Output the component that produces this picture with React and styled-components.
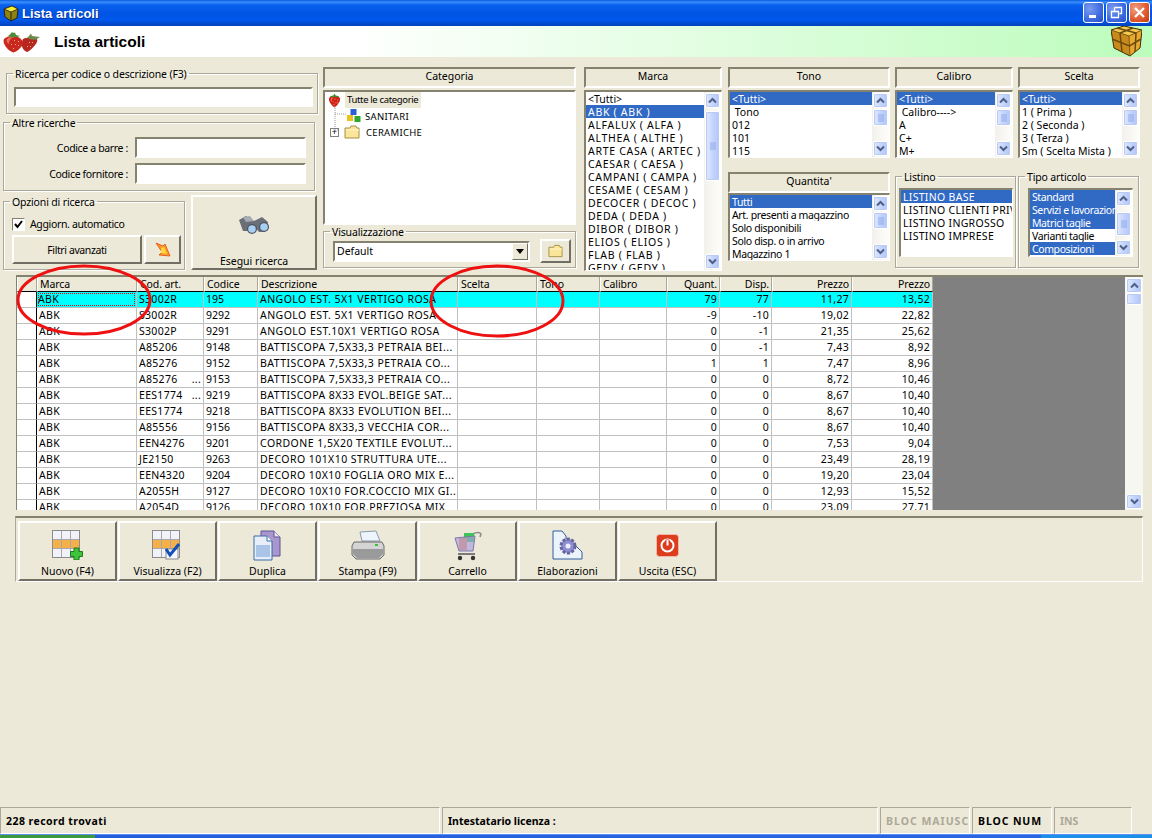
import React from "react";
import styled, { createGlobalStyle } from "styled-components";

const GlobalStyle = createGlobalStyle`
  html, body { margin: 0; padding: 0; background: #ece9d8; }
  * { box-sizing: border-box; }
`;

const sunken = `
  border-style: solid;
  border-width: 2px;
  border-color: #85836f #fff #fff #85836f;
`;
const raised = `
  border-style: solid;
  border-width: 2px;
  border-color: #fff #716f64 #716f64 #fff;
`;

const Page = styled.div`
  position: relative;
  width: 1152px;
  height: 838px;
  display: flex;
  flex-direction: column;
  overflow: hidden;
  background: #ece9d8;
  color: #000;
  font-family: "Noto Sans", "Liberation Sans", sans-serif;
  font-size: 10.5px;
`;

const TitleBar = styled.div`
  height: 26px;
  flex: none;
  display: flex;
  align-items: center;
  padding: 0 2px 0 3px;
  gap: 3px;
  background: linear-gradient(180deg, #0a5ae0 0, #3a8ffb 2px, #0a60ee 5px, #0054e3 14px, #0058ee 20px, #0042bb 26px);
  color: #fff;
  font-family: "Liberation Sans", sans-serif;
  font-weight: bold;
  font-size: 13px;
  text-shadow: 1px 1px 0 #0a2f9a;
`;
const TitleText = styled.span`
  flex: 1;
`;
const WinButtons = styled.div`
  display: flex;
  gap: 2px;
  margin-top: -2px;
`;
const WinButton = styled.div`
  width: 21px;
  height: 21px;
  border: 1px solid #fff;
  border-radius: 3px;
  display: flex;
  align-items: center;
  justify-content: center;
  background: ${(p) =>
    p.$close
      ? "radial-gradient(circle at 30% 30%, #f0a080, #e0582f 60%, #c03a12)"
      : "radial-gradient(circle at 30% 30%, #7a9cf0, #3d6ae0 60%, #2a50c8)"};
`;

const Header = styled.div`
  height: 31px;
  flex: none;
  display: flex;
  align-items: center;
  padding: 0 10px 0 3px;
  background: linear-gradient(90deg, #fff 0, #fff 30%, #bcfcbc 100%);
`;
const HeaderTitle = styled.div`
  flex: 1;
  margin-left: 13px;
  font-family: "Liberation Sans", sans-serif;
  font-weight: bold;
  font-size: 15.500px;
`;

const Filters = styled.div`
  height: 215px;
  flex: none;
  display: flex;
  padding: 10px 0 0 3px;
`;
const LeftCol = styled.div`
  width: 315px;
  margin-right: 5px;
  display: flex;
  flex-direction: column;
`;
const Group = styled.fieldset`
  margin: ${(p) => p.$margin || 0};
  width: ${(p) => p.$w}px;
  height: ${(p) => p.$h}px;
  flex: none;
  min-width: 0;
  padding: ${(p) => p.$top || 0}px ${(p) => p.$right || 0}px 0 0;
  border: 1px solid #aca899;
  box-shadow: 1px 1px 0 #fff, inset 1px 1px 0 #fff;
  & > :not(legend) {
    margin-left: ${(p) => p.$inset || 0}px;
  }
`;
const Legend = styled.legend`
  margin-left: 6px;
  padding: 0 2px;
  line-height: 15px;
  height: 13px;
  letter-spacing: -0.15px;
  white-space: nowrap;
`;
const TextBox = styled.div`
  ${sunken}
  background: #fff;
  width: ${(p) => (p.$w ? `${p.$w}px` : "auto")};
  height: ${(p) => p.$h || 21}px;
`;
const FieldRow = styled.div`
  display: flex;
  align-items: center;
  justify-content: flex-end;
  gap: 7px;
  margin-bottom: 5px;
  letter-spacing: -0.35px;
`;
const OptionsRow = styled.div`
  display: flex;
  align-items: flex-start;
  margin-top: 4px;
`;
const CheckRow = styled.div`
  display: flex;
  align-items: center;
  gap: 5px;
  height: 14px;
  letter-spacing: -0.35px;
`;
const CheckBox = styled.div`
  width: 13px;
  height: 13px;
  ${sunken}
  border-width: 1px;
  background: #fff;
  display: flex;
  align-items: center;
  justify-content: center;
`;
const ButtonRow = styled.div`
  display: flex;
  gap: 2px;
  margin-top: 4px;
`;
const Button = styled.div`
  ${raised}
  width: ${(p) => p.$w}px;
  height: ${(p) => p.$h}px;
  flex: none;
  display: flex;
  align-items: center;
  justify-content: center;
  background: #ece9d8;
  letter-spacing: ${(p) => p.$spread || 0}px;
`;
const SearchButton = styled(Button)`
  flex-direction: column;
  justify-content: flex-start;
  margin-left: 6px;
  padding-top: 18px;
`;
const SearchLabel = styled.span`
  margin-top: 19px;
`;

const Column = styled.div`
  width: ${(p) => p.$w}px;
  margin-right: ${(p) => p.$mr || 0}px;
  flex: none;
  display: flex;
  flex-direction: column;
`;
const PanelHead = styled.div`
  ${sunken}
  height: ${(p) => p.$h || 21}px;
  flex: none;
  display: flex;
  align-items: center;
  justify-content: center;
  padding-bottom: 3px;
`;
const TreeBox = styled.div`
  ${sunken}
  background: #fff;
  height: 135px;
  margin-top: 2px;
  position: relative;
`;
const TreeRow = styled.div`
  height: 16px;
  display: flex;
  align-items: center;
  padding-left: ${(p) => p.$indent}px;
  white-space: nowrap;
`;
const TreeRoot = styled.span`
  background: #ece9d8;
  margin-left: 3px;
  padding: 0 3px 0 2px;
  line-height: 16px;
  font-size: 9.500px;
  letter-spacing: -0.35px;
`;
const TreeText = styled.span`
  margin-left: ${(p) => p.$ml || 5}px;
  font-size: 9.500px;
  letter-spacing: 0.3px;
`;
const TreeLines = styled.svg`
  position: absolute;
  left: 0;
  top: 0;
`;
const Expander = styled.span`
  width: 9px;
  height: 9px;
  margin-right: 5px;
  border: 1px solid #808080;
  display: flex;
  align-items: center;
  justify-content: center;
  background: #fff;
  font-size: 9px;
  line-height: 7px;
  font-family: "Liberation Sans", sans-serif;
`;
const ViewRow = styled.div`
  display: flex;
  align-items: center;
  gap: 10px;
`;
const Select = styled.div`
  ${sunken}
  width: 197px;
  height: 21px;
  background: #fff;
  display: flex;
  align-items: center;
  justify-content: space-between;
  padding-left: 2px;
`;
const SelectArrow = styled.div`
  ${raised}
  border-width: 1px;
  width: 16px;
  height: 17px;
  background: #ece9d8;
  display: flex;
  align-items: center;
  justify-content: center;
`;

const ListBox = styled.div`
  ${sunken}
  border-bottom-width: 1px;
  border-right-width: 1px;
  background: #fff;
  height: ${(p) => p.$h}px;
  margin-top: ${(p) => p.$mt || 0}px;
  display: flex;
  overflow: hidden;
`;
const ListItems = styled.div`
  flex: 1;
  min-width: 0;
  overflow: hidden;
`;
const ListItem = styled.div`
  height: 13px;
  line-height: 14px;
  padding-left: 2px;
  white-space: nowrap;
  overflow: hidden;
  letter-spacing: ${(p) => p.$spread || 0}px;
  background: ${(p) => (p.$sel ? "#316ac5" : "#fff")};
  color: ${(p) => (p.$sel ? "#fff" : "#000")};
`;

const ScrollWrap = styled.div`
  width: 17px;
  flex: none;
  display: flex;
  flex-direction: column;
  padding: 1px;
  background: linear-gradient(90deg, #f3f1ec, #fdfdfa);
`;
const ScrollKnob = styled.div`
  height: ${(p) => p.$h || 15}px;
  flex: none;
  border: 1px solid #fff;
  border-radius: 2px;
  background: linear-gradient(90deg, #e1eafe, #c3d3fd 55%, #b4c7f8);
  box-shadow: 0 0 0 1px #b9cbf3 inset;
  display: flex;
  align-items: center;
  justify-content: center;
  margin-top: ${(p) => p.$mt || 0}px;
`;
const ScrollFill = styled.div`
  flex: 1;
`;

const RightPart = styled.div`
  width: 412px;
  display: flex;
  flex-direction: column;
`;
const RightRow = styled.div`
  display: flex;
  margin-top: ${(p) => p.$mt || 0}px;
`;

const GridWrap = styled.div`
  position: relative;
  display: flex;
  height: 235px;
  margin: 3px 9px 0 16px;
  border-top: 2px solid #85836f;
  border-left: 1px solid #85836f;
  background: #808080;
  overflow: hidden;
`;
const GridBody = styled.div`
  width: 1108px;
  flex: none;
  overflow: hidden;
`;
const GridScroll = styled(ScrollWrap)`
  width: 18px;
  background: #f7f7f2;
`;
const Table = styled.table`
  width: 916px;
  table-layout: fixed;
  border-collapse: separate;
  border-spacing: 0;
`;
const Th = styled.th`
  height: 15px;
  padding: 0 2px;
  background: #ece9d8;
  border-right: 1px solid #aca899;
  border-left: 1px solid #fff;
  border-bottom: 1px solid #000;
  font-weight: normal;
  font-size: 10.500px;
  letter-spacing: -0.1px;
  text-align: ${(p) => (p.$right ? "right" : "left")};
  white-space: nowrap;
  overflow: hidden;
`;
const Td = styled.td`
  height: 16px;
  padding: 0 2px;
  border-right: 1px solid #c0c0c0;
  border-bottom: 1px solid #c0c0c0;
  background: ${(p) => (p.$active ? "#00ffff" : "#fff")};
  font-size: 10.500px;
  line-height: 13px;
  letter-spacing: ${(p) => p.$spread ?? 0.3}px;
  text-align: ${(p) => (p.$right ? "right" : "left")};
  white-space: nowrap;
  overflow: hidden;
`;
const Indicator = styled(Td)`
  background: #fff;
  border-right: 1px solid #000;
`;
const FocusCell = styled.div`
  height: 13px;
  margin: 0 -1px;
  outline: 1px dotted #f00;
  outline-offset: -1px;
`;
const CodeCell = styled.div`
  display: flex;
  justify-content: space-between;
`;

const Toolbar = styled.div`
  display: flex;
  gap: 1px;
  height: 66px;
  margin: 6px 9px 0 15px;
  padding: 3px 0 0 2px;
  border-top: 2px solid #85836f;
  border-left: 1px solid #aca899;
  border-bottom: 1px solid #fff;
  border-right: 1px solid #fff;
`;
const ToolButton = styled(Button)`
  flex-direction: column;
  justify-content: flex-start;
  padding-top: 7px;
  gap: 4px;
`;
const ToolIcon = styled.div`
  height: 30px;
  display: flex;
  align-items: center;
  justify-content: center;
`;

const Spacer = styled.div`
  flex: 1;
`;
const StatusBar = styled.div`
  display: flex;
  height: 27px;
  flex: none;
  gap: 2px;
  font-weight: bold;
  font-size: 10.500px;
`;
const StatusPanel = styled.div`
  width: ${(p) => p.$w}px;
  flex: none;
  display: flex;
  align-items: center;
  padding-left: ${(p) => p.$pad || 5}px;
  border: 1px solid;
  border-color: #aca899 #fff #fff #aca899;
  color: ${(p) => (p.$off ? "#aca899" : "#000")};
  letter-spacing: ${(p) => p.$spread || 0}px;
  white-space: nowrap;
  overflow: hidden;
`;
const Taskbar = styled.div`
  height: 4px;
  flex: none;
  background: linear-gradient(90deg, #3c9a3c 0, #3c9a3c 95px, #245edb 95px, #2a66e0 1040px, #1a90e8 1042px, #1a90e8 100%);
  border-top: 1px solid #5b90f0;
`;

const Annotations = styled.svg`
  position: absolute;
  left: 0;
  top: 0;
  pointer-events: none;
`;

const Chevron = ({ down }) => (
  <svg width="9" height="7" viewBox="0 0 9 7">
    <path d={down ? "M1 1.500 4.500 5 8 1.500" : "M1 5.500 4.500 2 8 5.500"} fill="none" stroke="#4d6185" strokeWidth="2" />
  </svg>
);

const Grip = () => (
  <svg width="8" height="8" viewBox="0 0 8 8">
    <path d="M1 1h6M1 3h6M1 5h6M1 7h6" stroke="#8faae8" strokeWidth="1" />
  </svg>
);

const ScrollBar = ({ top, height, knob = 15 }) => (
  <ScrollWrap>
    <ScrollKnob $h={knob}><Chevron /></ScrollKnob>
    <ScrollKnob $mt={top} $h={height}><Grip /></ScrollKnob>
    <ScrollFill />
    <ScrollKnob $h={knob}><Chevron down /></ScrollKnob>
  </ScrollWrap>
);

const Seeds = ({ points }) => (
  <>
    {points.map(([x, y]) => (
      <rect key={`${x}-${y}`} x={x} y={y} width="1" height="1" fill="#f6b070" />
    ))}
  </>
);

const Strawberry = ({ size = 16 }) => (
  <svg width={size} height={size} viewBox="0 0 16 16">
    <path d="M8 15.500C5 13.500 2 9.500 2 6.500 2 4 5 3.500 8 3.500s6 .5 6 3c0 3-3 7-6 9z" fill="#cf2018" />
    <path d="M4 6c.5-1 1.500-1.500 3-1.500C5.500 6 5 7.500 5 9.500 4 8.500 3.500 7 4 6z" fill="#ee6a52" />
    <Seeds points={[[8, 6], [11, 7], [6, 9], [9, 10], [11, 10], [7, 12]]} />
    <path d="M3 3.500C5 3 6 3 7 2.500L8 .5l1 2c1 .5 2 .5 4 1-1.500 1.500-3.500 1-5 .5-1.500.5-3.500 1-5-.5z" fill="#3f8a2e" />
  </svg>
);

const Strawberries = () => (
  <svg width="38" height="22" viewBox="0 0 38 22">
    <path d="M20 8c3-1.500 10-2 13-.5 2 1 1.500 3-.5 6C30 17 26 20.500 24 21c-2-.5-4.500-3-5-5.500-.5-3 0-6 1-7.500z" fill="#b5271f" />
    <path d="M24 7c1.500-1 3-3.500 4-4.500l1 2.500 8 1-4 2.500c-3 .5-6 0-9-1.500z" fill="#6d8a4a" />
    <path d="M1 8c3-3.500 11-4 15-1.500 4 2.500 5 6 2.500 9-2.500 3-5.500 5.500-8 6C7 20.500 3 17 1.500 13.500.5 11.500.2 9.500 1 8z" fill="#c8281f" />
    <path d="M4 8c2-2 5-2 7-2-3 1-5 3-5 7-2-1-3-3-2-5z" fill="#e8705c" />
    <Seeds points={[[11, 9], [15, 10], [8, 13], [12, 13], [15, 14], [10, 17], [26, 11], [29, 11], [24, 15], [27, 15]]} />
    <path d="M5 5c2-1 3-3 4-4 1 1 2 1 3 .5l1 2.500 4 1c-3 1.500-9 2-12 0z" fill="#4f8a3a" />
  </svg>
);

const BoxIcon = () => (
  <svg width="31" height="31" viewBox="0 0 31 31">
    <path d="M0 4 13 0l18 4-13 6z" fill="#f6c850" />
    <path d="M0 4l18 6 1 20-16-8z" fill="#c98a1c" />
    <path d="M31 4l-2 18-10 8-1-20z" fill="#e8a92e" />
    <path d="M0 4 13 0l18 4-2 18-10 8-16-8z" fill="none" stroke="#3e2c08" strokeWidth="1" />
    <path d="M0 4l18 6 13-6M18 10l1 20" fill="none" stroke="#7a5712" strokeWidth="1" />
    <path d="M6 2l19 5M22 2 9 7M9 7l2 19M25 7l-1 19M1 13l17.500 7L30 13" fill="none" stroke="#6a4a0e" strokeWidth="1.500" />
  </svg>
);

const SmallCube = () => (
  <svg width="16" height="17" viewBox="0 0 16 17">
    <path d="M1 4 9 1l6 3-1 9-6 3-6-4z" fill="#8f8310" stroke="#222" strokeWidth="1" />
    <path d="M1 4l7 3 7-3-6-3z" fill="#f7ee34" stroke="#222" strokeWidth=".8" />
    <path d="M8 7v9" stroke="#222" strokeWidth="1" />
  </svg>
);

const Blocks = () => (
  <svg width="16" height="16" viewBox="0 0 16 16">
    <rect x="4.500" y="1" width="6" height="6" fill="#2c60d8" />
    <rect x="1" y="7" width="6" height="6" fill="#e8c41c" />
    <rect x="8.500" y="8" width="6" height="6" fill="#2fa82f" />
  </svg>
);

const Folder = ({ w = 16, h = 14 }) => (
  <svg width={w} height={h} viewBox="0 0 16 14">
    <path d="M1 3h5l1-2h5l1 2h2v10H1z" fill="#fbe59a" stroke="#a89040" strokeWidth="1" />
    <path d="M2 5h13" stroke="#fff6c8" strokeWidth="1" />
  </svg>
);

const ArrowIcon = () => (
  <svg width="16" height="15" viewBox="0 0 16 15">
    <path d="M1 1 8 4l2-2 5 12-11-1 3-3z" fill="#fb9a22" stroke="#e04a10" strokeWidth=".8" />
    <path d="M6 6l3-1 3 7-6-1z" fill="#fdd640" />
  </svg>
);

const Binoculars = () => (
  <svg width="32" height="20" viewBox="0 0 32 20">
    <path d="M1 5 8 1l8 5 8-4 6 5-3 10h-6l-5-6-4 5H5z" fill="#6b7078" />
    <path d="M5 2l7-1 4 5-8 1z" fill="#a7abb2" />
    <circle cx="14" cy="14" r="5" fill="#4d5560" />
    <circle cx="14" cy="14" r="3.800" fill="#a8d0f4" />
    <circle cx="26" cy="12" r="5" fill="#4d5560" />
    <circle cx="26" cy="12" r="3.800" fill="#a8d0f4" />
  </svg>
);

const TableBase = () => (
  <>
    <rect x=".5" y=".5" width="27" height="27" fill="#f2f2fb" stroke="#8b8b8b" />
    <rect x="1" y="10" width="26" height="9" fill="#f5b04a" />
    <path d="M9.500 1v26M18.500 1v26M1 9.500h26M1 18.500h26" stroke="#a8a8a8" strokeWidth="1" />
  </>
);

const NewIcon = () => (
  <svg width="31" height="30" viewBox="0 0 31 30">
    <TableBase />
    <path d="M22 18h5v3.500h3.500v5H27V30h-5v-3.500h-3.500v-5H22z" fill="#3ec43a" stroke="#1d7c1b" strokeWidth="1" />
  </svg>
);

const ViewIcon = () => (
  <svg width="31" height="30" viewBox="0 0 31 30">
    <TableBase />
    <rect x="14" y="19" width="12" height="10" fill="#f7f7ff" stroke="#8b8b8b" />
    <path d="M14 19l4 6 9-11" fill="none" stroke="#1450b4" strokeWidth="3" />
  </svg>
);

const DupIcon = () => (
  <svg width="29" height="31" viewBox="0 0 29 31">
    <path d="M8 1h13l6 6v19H8z" fill="#a996cf" stroke="#5f5492" />
    <path d="M21 1v6h6" fill="#e8e2f4" stroke="#5f5492" />
    <path d="M1 6h13l5 5v19H1z" fill="#e6eefa" stroke="#3b6aa8" />
    <rect x="3" y="15" width="14" height="12" fill="#aac4e8" />
    <path d="M14 6v5h5" fill="#fff" stroke="#3b6aa8" />
  </svg>
);

const PrintIcon = () => (
  <svg width="34" height="31" viewBox="0 0 34 31">
    <path d="M9 2 25 1l4 10H11z" fill="#eef4fb" stroke="#8a9aae" />
    <path d="M3 12h28l2 4v9l-4 4H5l-4-4v-9z" fill="#d4d4d4" stroke="#6a6a6a" />
    <path d="M2 19h30v5l-4 4H6l-4-4z" fill="#9a9a9a" />
    <rect x="24" y="14" width="3" height="2" fill="#38c038" />
  </svg>
);

const CartIcon = () => (
  <svg width="28" height="31" viewBox="0 0 28 31">
    <path d="M19 5c1-3 7-3 8-1l-1 3" fill="none" stroke="#8a8a8a" strokeWidth="1.500" />
    <rect x="10" y="3" width="10" height="9" fill="#3ec45a" />
    <rect x="5" y="8" width="8" height="12" fill="#f08a4a" />
    <path d="M1 8l20-2-2 15H5z" fill="#a9a0e0" fillOpacity=".65" stroke="#7d78a8" />
    <path d="M4 24h17" stroke="#7a7a7a" strokeWidth="2" />
    <circle cx="6" cy="28" r="2.200" fill="#333" />
    <circle cx="19" cy="28" r="2.200" fill="#333" />
  </svg>
);

const ProcessIcon = () => (
  <svg width="31" height="31" viewBox="0 0 31 31">
    <path d="M1 1h9l4 5v6l6 0 10 10v7H1z" fill="#edf3fb" stroke="#2f5f9f" />
    <circle cx="16" cy="16" r="7" fill="#8f8fd0" stroke="#64649e" strokeWidth="3" strokeDasharray="3 1.500" />
    <circle cx="16" cy="16" r="2.500" fill="#eef" />
  </svg>
);

const PowerIcon = () => (
  <svg width="23" height="23" viewBox="0 0 23 23">
    <rect x=".5" y=".5" width="22" height="22" rx="3" fill="#dc3d1c" stroke="#f2b8a8" />
    <circle cx="11.500" cy="11.500" r="6" fill="none" stroke="#fff" strokeWidth="2" />
    <path d="M11.500 5.500v6" stroke="#dc3d1c" strokeWidth="4" />
    <path d="M11.500 6v5.500" stroke="#fff" strokeWidth="2" />
  </svg>
);

const marche = ["<Tutti>", "ABK ( ABK )", "ALFALUX ( ALFA )", "ALTHEA ( ALTHE )", "ARTE CASA ( ARTEC )", "CAESAR ( CAESA )", "CAMPANI ( CAMPA )", "CESAME ( CESAM )", "DECOCER ( DECOC )", "DEDA ( DEDA )", "DIBOR ( DIBOR )", "ELIOS ( ELIOS )", "FLAB ( FLAB )", "GEDY ( GEDY )"];
const toni = ["<Tutti>", "\u00a0Tono", "012", "101", "115"];
const calibri = ["<Tutti>", "\u00a0Calibro---->", "A", "C+", "M+"];
const scelte = ["<Tutti>", "1 ( Prima )", "2 ( Seconda )", "3 ( Terza )", "Sm ( Scelta Mista )"];
const quantita = ["Tutti", "Art. presenti a magazzino", "Solo disponibili", "Solo disp. o in arrivo", "Magazzino 1"];
const listini = ["LISTINO BASE", "LISTINO CLIENTI PRIVATI", "LISTINO INGROSSO", "LISTINO IMPRESE"];
const tipi = [
  { t: "Standard", sel: true },
  { t: "Servizi e lavorazioni", sel: true },
  { t: "Matrici taglie", sel: true },
  { t: "Varianti taglie", sel: false },
  { t: "Composizioni", sel: true },
];

const colWidths = [20, 100, 67, 54, 200, 79, 63, 67, 53, 52, 80, 81];
const heads = [
  ["Marca"], ["Cod. art."], ["Codice"], ["Descrizione"], ["Scelta"], ["Tono"], ["Calibro"],
  ["Quant.", true], ["Disp.", true], ["Prezzo", true], ["Prezzo", true],
];
const rows = [
  ["S3002R", "", "195", "ANGOLO EST. 5X1 VERTIGO ROSA", "79", "77", "11,27", "13,52"],
  ["S3002R", "", "9292", "ANGOLO EST. 5X1 VERTIGO ROSA", "-9", "-10", "19,02", "22,82"],
  ["S3002P", "", "9291", "ANGOLO EST.10X1 VERTIGO ROSA", "0", "-1", "21,35", "25,62"],
  ["A85206", "", "9148", "BATTISCOPA 7,5X33,3 PETRAIA BEI...", "0", "-1", "7,43", "8,92"],
  ["A85276", "", "9152", "BATTISCOPA 7,5X33,3 PETRAIA CO...", "1", "1", "7,47", "8,96"],
  ["A85276", "...", "9153", "BATTISCOPA 7,5X33,3 PETRAIA CO...", "0", "0", "8,72", "10,46"],
  ["EES1774", "...", "9219", "BATTISCOPA 8X33 EVOL.BEIGE SAT...", "0", "0", "8,67", "10,40"],
  ["EES1774", "", "9218", "BATTISCOPA 8X33 EVOLUTION BEI...", "0", "0", "8,67", "10,40"],
  ["A85556", "", "9156", "BATTISCOPA 8X33,3 VECCHIA COR...", "0", "0", "8,67", "10,40"],
  ["EEN4276", "", "9201", "CORDONE 1,5X20 TEXTILE EVOLUT...", "0", "0", "7,53", "9,04"],
  ["JE2150", "", "9263", "DECORO 101X10 STRUTTURA UTE...", "0", "0", "23,49", "28,19"],
  ["EEN4320", "", "9204", "DECORO 10X10 FOGLIA ORO MIX E...", "0", "0", "19,20", "23,04"],
  ["A2055H", "", "9127", "DECORO 10X10 FOR.COCCIO MIX GI...", "0", "0", "12,93", "15,52"],
  ["A2054D", "", "9126", "DECORO 10X10 FOR.PREZIOSA MIX", "0", "0", "23,09", "27,71"],
];

const tools = [
  ["Nuovo (F4)", <NewIcon key="n" />],
  ["Visualizza (F2)", <ViewIcon key="v" />],
  ["Duplica", <DupIcon key="d" />],
  ["Stampa (F9)", <PrintIcon key="p" />],
  ["Carrello", <CartIcon key="c" />],
  ["Elaborazioni", <ProcessIcon key="e" />],
  ["Uscita (ESC)", <PowerIcon key="u" />],
];

const Items = ({ list, selected = 0, spread = 0 }) => (
  <ListItems>
    {list.map((t, i) => (
      <ListItem key={t} $sel={i === selected} $spread={t === "<Tutti>" ? 0 : spread}>{t}</ListItem>
    ))}
  </ListItems>
);

export default function App() {
  return (
    <Page>
      <GlobalStyle />
      <TitleBar>
        <SmallCube />
        <TitleText>Lista articoli</TitleText>
        <WinButtons>
          <WinButton>
            <svg width="11" height="11" viewBox="0 0 11 11"><rect x="1" y="8" width="7" height="3" fill="#fff" /></svg>
          </WinButton>
          <WinButton>
            <svg width="13" height="13" viewBox="0 0 13 13">
              <path d="M4.500 1.500h7v6h-2M1.500 5.500h7v6h-7zM4.500 1.500v4" fill="none" stroke="#fff" strokeWidth="1.300" />
            </svg>
          </WinButton>
          <WinButton $close>
            <svg width="13" height="13" viewBox="0 0 13 13">
              <path d="M2 2l9 9M11 2l-9 9" stroke="#fff" strokeWidth="2.200" />
            </svg>
          </WinButton>
        </WinButtons>
      </TitleBar>

      <Header>
        <Strawberries />
        <HeaderTitle>Lista articoli</HeaderTitle>
        <BoxIcon />
      </Header>

      <Filters>
        <LeftCol>
          <Group $w={312} $h={47} $margin="0 0 0 3px" $top={7} $right={4} $inset={7}>
            <Legend>Ricerca per codice o descrizione (F3)</Legend>
            <TextBox $h={20} />
          </Group>
          <Group $w={312} $h={75} $margin="2px 0 0 0" $top={8} $right={8}>
            <Legend>Altre ricerche</Legend>
            <FieldRow>Codice a barre : <TextBox $w={171} /></FieldRow>
            <FieldRow>Codice fornitore : <TextBox $w={171} /></FieldRow>
          </Group>
          <OptionsRow>
            <Group $w={182} $h={75} $top={9} $inset={8}>
              <Legend>Opzioni di ricerca</Legend>
              <CheckRow>
                <CheckBox>
                  <svg width="9" height="9" viewBox="0 0 9 9"><path d="M1 4l2.500 3L8 1" fill="none" stroke="#000" strokeWidth="2" /></svg>
                </CheckBox>
                Aggiorn. automatico
              </CheckRow>
              <ButtonRow>
                <Button $w={130} $h={29} $spread={-0.4}>Filtri avanzati</Button>
                <Button $w={37} $h={29}><ArrowIcon /></Button>
              </ButtonRow>
            </Group>
            <SearchButton $w={126} $h={75}>
              <Binoculars />
              <SearchLabel>Esegui ricerca</SearchLabel>
            </SearchButton>
          </OptionsRow>
        </LeftCol>

        <Column $w={253} $mr={8}>
          <PanelHead>Categoria</PanelHead>
          <TreeBox>
            <TreeLines width="60" height="60">
              <path d="M10 14v22M10 22h12M10 38h4" stroke="#999" strokeDasharray="1 1" fill="none" />
            </TreeLines>
            <TreeRow $indent={2}><Strawberry size={15} /><TreeRoot>Tutte le categorie</TreeRoot></TreeRow>
            <TreeRow $indent={21}><Blocks /><TreeText $ml={3}>SANITARI</TreeText></TreeRow>
            <TreeRow $indent={5}><Expander>+</Expander><Folder /><TreeText $ml={6}>CERAMICHE</TreeText></TreeRow>
          </TreeBox>
          <Group $w={253} $h={43} $top={1} $right={4} $inset={9}>
            <Legend>Visualizzazione</Legend>
            <ViewRow>
              <Select>
                Default
                <SelectArrow>
                  <svg width="8" height="5" viewBox="0 0 8 5"><path d="M0 0h8L4 5z" fill="#000" /></svg>
                </SelectArrow>
              </Select>
              <Button $w={31} $h={24}><Folder w={15} h={14} /></Button>
            </ViewRow>
          </Group>
        </Column>

        <Column $w={138} $mr={6}>
          <PanelHead>Marca</PanelHead>
          <ListBox $h={181} $mt={2}>
            <Items list={marche} selected={1} spread={0.7} />
            <ScrollBar top={3} height={70} />
          </ListBox>
        </Column>

        <RightPart>
          <RightRow>
            <Column $w={162} $mr={5}>
              <PanelHead>Tono</PanelHead>
              <ListBox $h={68} $mt={2}><Items list={toni} /><ScrollBar top={1} height={17} /></ListBox>
            </Column>
            <Column $w={118} $mr={5}>
              <PanelHead>Calibro</PanelHead>
              <ListBox $h={68} $mt={2}><Items list={calibri} /><ScrollBar top={1} height={17} /></ListBox>
            </Column>
            <Column $w={122}>
              <PanelHead>Scelta</PanelHead>
              <ListBox $h={68} $mt={2}><Items list={scelte} /><ScrollBar top={1} height={17} /></ListBox>
            </Column>
          </RightRow>
          <RightRow $mt={14}>
            <Column $w={162} $mr={5}>
              <PanelHead>Quantita'</PanelHead>
              <ListBox $h={68}><Items list={quantita} spread={-0.35} /><ScrollBar top={1} height={17} /></ListBox>
            </Column>
            <Group $w={121} $h={98} $margin="-2px 2px 0 0" $top={5} $right={2} $inset={3}>
              <Legend>Listino</Legend>
              <ListBox $h={69}><Items list={listini} spread={0.3} /></ListBox>
            </Group>
            <Group $w={121} $h={98} $margin="-2px 0 0 0" $top={5} $right={5} $inset={9}>
              <Legend>Tipo articolo</Legend>
              <ListBox $h={69}>
                <ListItems>
                  {tipi.map((x) => (
                    <ListItem key={x.t} $sel={x.sel} $spread={-0.4}>{x.t}</ListItem>
                  ))}
                </ListItems>
                <ScrollBar top={6} height={24} />
              </ListBox>
            </Group>
          </RightRow>
        </RightPart>
      </Filters>

      <GridWrap>
        <GridBody>
          <Table>
            <colgroup>
              {colWidths.map((w, i) => <col key={i} style={{ width: w }} />)}
            </colgroup>
            <thead>
              <tr>
                <Th />
                {heads.map(([h, right], i) => <Th key={i} $right={right}>{h}</Th>)}
              </tr>
            </thead>
            <tbody>
              {rows.map((r, i) => (
                <tr key={r[2]}>
                  <Indicator />
                  <Td $active={i === 0}>{i === 0 ? <FocusCell>ABK</FocusCell> : "ABK"}</Td>
                  <Td $active={i === 0}><CodeCell><span>{r[0]}</span><span>{r[1]}</span></CodeCell></Td>
                  <Td $active={i === 0} $spread={0}>{r[2]}</Td>
                  <Td $active={i === 0} $spread={0.45}>{r[3]}</Td>
                  <Td $active={i === 0} />
                  <Td $active={i === 0} />
                  <Td $active={i === 0} />
                  {r.slice(4).map((v, j) => <Td key={j} $active={i === 0} $right>{v}</Td>)}
                </tr>
              ))}
            </tbody>
          </Table>
        </GridBody>
        <GridScroll>
          <ScrollKnob><Chevron /></ScrollKnob>
          <ScrollKnob $h={12} />
          <ScrollFill />
          <ScrollKnob><Chevron down /></ScrollKnob>
        </GridScroll>
      </GridWrap>

      <Toolbar>
        {tools.map(([label, icon]) => (
          <ToolButton key={label} $w={99} $h={60}>
            <ToolIcon>{icon}</ToolIcon>
            {label}
          </ToolButton>
        ))}
      </Toolbar>

      <Spacer />

      <StatusBar>
        <StatusPanel $w={440} $spread={0.45}>228 record trovati</StatusPanel>
        <StatusPanel $w={436}>Intestatario licenza :</StatusPanel>
        <StatusPanel $w={90} $off $spread={1}>BLOC MAIUSC</StatusPanel>
        <StatusPanel $w={80} $spread={0.9}>BLOC NUM</StatusPanel>
        <StatusPanel $w={78} $off>INS</StatusPanel>
      </StatusBar>
      <Taskbar />

      <Annotations width="1152" height="838">
        <ellipse cx="84" cy="300" rx="66" ry="34" fill="none" stroke="#ee1111" strokeWidth="3" />
        <ellipse cx="497" cy="301" rx="66" ry="35" fill="none" stroke="#ee1111" strokeWidth="3" />
      </Annotations>
    </Page>
  );
}
